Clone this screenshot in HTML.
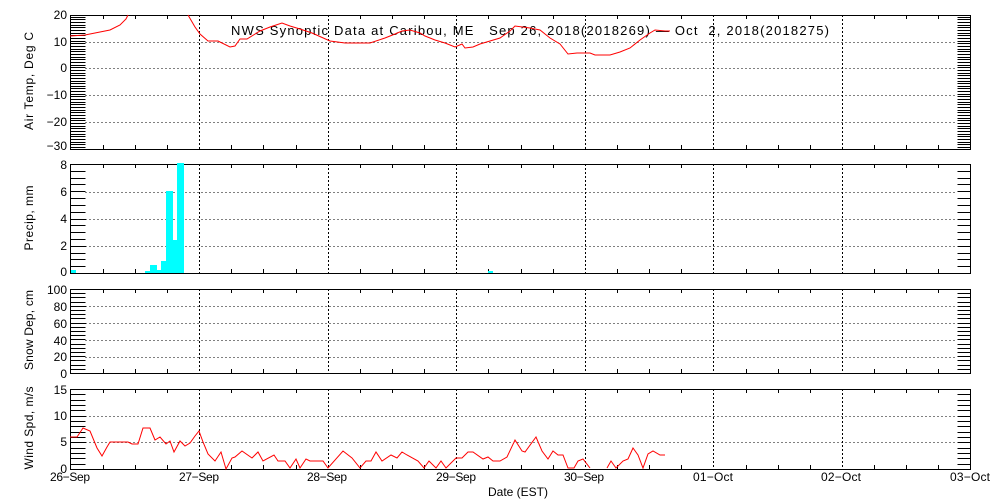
<!DOCTYPE html><html><head><meta charset="utf-8"><style>
html,body{margin:0;padding:0;background:#fff;width:1000px;height:500px;overflow:hidden}
svg text{font-family:"Liberation Sans",sans-serif;font-size:12px;fill:#000}
</style></head><body>
<svg id="s" width="1000" height="500" xmlns="http://www.w3.org/2000/svg" shape-rendering="crispEdges">
<g id="g"></g>
<g text-anchor="end">
<text x="67" y="19">20</text><text x="67" y="46">10</text><text x="67" y="72">0</text><text x="67" y="99">−10</text><text x="67" y="126">−20</text><text x="67" y="150">−30</text>
<text x="67" y="169">8</text><text x="67" y="196">6</text><text x="67" y="223">4</text><text x="67" y="250">2</text><text x="67" y="276">0</text>
<text x="67" y="294">100</text><text x="67" y="311">80</text><text x="67" y="328">60</text><text x="67" y="345">40</text><text x="67" y="361">20</text><text x="67" y="378">0</text>
<text x="67" y="394">15</text><text x="67" y="420">10</text><text x="67" y="446">5</text><text x="67" y="473">0</text>
</g>
<g text-anchor="middle">
<text x="70" y="481" textLength="40">26−Sep</text><text x="199" y="481" textLength="40">27−Sep</text><text x="327" y="481" textLength="40">28−Sep</text><text x="456" y="481" textLength="40">29−Sep</text><text x="584" y="481" textLength="40">30−Sep</text><text x="713" y="481" textLength="40">01−Oct</text><text x="841" y="481" textLength="40">02−Oct</text><text x="970" y="481" textLength="40">03−Oct</text>
<text x="518" y="496" textLength="60">Date (EST)</text>
<text transform="translate(33,81) rotate(-90)" textLength="98">Air Temp, Deg C</text>
<text transform="translate(33,218) rotate(-90)" textLength="65">Precip, mm</text>
<text transform="translate(33,330) rotate(-90)" textLength="80">Snow Dep, cm</text>
<text transform="translate(33,428) rotate(-90)" textLength="83">Wind Spd, m/s</text>
</g>
<text x="231" y="35" style="font-size:13px" textLength="598" xml:space="preserve">NWS Synoptic Data at Caribou, ME   Sep 26, 2018(2018269) — Oct  2, 2018(2018275)</text>
<g fill="#00ffff" shape-rendering="crispEdges">
<rect x="71" y="270" width="5" height="3"/><rect x="145" y="271" width="5" height="2"/><rect x="150" y="265" width="7" height="8"/><rect x="157" y="270" width="4" height="3"/><rect x="161" y="261" width="5" height="12"/><rect x="166" y="191" width="7" height="82"/><rect x="173" y="240" width="4" height="33"/><rect x="177" y="163" width="7" height="110"/><rect x="488" y="271" width="5" height="2"/>
</g>
<g fill="none" stroke="#f00" stroke-width="1" shape-rendering="auto">
<polyline points="70,36 85,35 100,32 110,30 120,25 126,19 128,15"/>
<polyline points="188,15 195,27 200,34 208,41 218,41 230,47 235,46 240,39 247,39 260,31 270,27 282,23 290,26 300,29 312,33 330,41 345,43 370,43 385,38 395,34 402,31 410,30 420,33 425,36 435,40 445,43 455,47 462,44 465,48 473,47 480,44 490,41 500,38 510,31 515,26 530,28 540,30 550,38 560,44 568,54 577,53 590,53 595,55 610,55 620,52 630,48 640,40 650,33 655,30 665,31 670,31"/>
<polyline points="70,437 77,437 83,428 90,431 97,448 102,456 107,447 110,442 120,442 128,442 132,444 138,444 143,428 150,428 155,440 160,437 166,444 170,441 174,452 180,441 185,446 190,443 195,436 199,431 203,442 208,454 215,461 221,452 226,469 232,458 235,457 242,451 252,458 258,452 263,461 274,455 278,461 285,461 290,468 296,459 300,468 306,459 310,461 323,461 328,468 343,451 352,458 360,468 366,461 371,461 376,452 382,461 391,455 397,458 402,452 407,455 418,461 424,468 429,461 436,468 441,461 446,468 456,458 462,458 468,452 473,452 483,459 488,457 493,461 500,461 507,457 515,440 522,451 525,452 536,437 542,451 548,459 553,451 558,455 563,455 568,468 574,468 578,461 583,459 590,468"/>
<polyline points="607,468 611,461 616,468 623,461 628,459 633,448 638,455 643,468 648,454 653,451 660,455 665,455"/>
</g>
</svg>
<script>
var g=document.getElementById('g'),N='http://www.w3.org/2000/svg';
function L(x1,y1,x2,y2,d){var l=document.createElementNS(N,'line');l.setAttribute('x1',x1);l.setAttribute('y1',y1);l.setAttribute('x2',x2);l.setAttribute('y2',y2);l.setAttribute('stroke','#000');if(d)l.setAttribute('stroke-dasharray',d);g.appendChild(l);}
var X0=70.5,X1=970.5,day=(X1-X0)/7;
var P=[[15,149,50,[41.5,68,95,122]],[164,273,16,[191.5,219,246]],[289,373,20,[306,323,340,357]],[389,469,15,[416,442]]];
P.forEach(function(p,i){
 var t=p[0],b=p[1];
 L(X0,t+.5,X1,t+.5);L(X0,b+.5,X1,b+.5);L(X0,t,X0,b+1);L(X1,t,X1,b+1);
 var n=p[2],h=(b-t)/n;
 if(i==0){h=2.66;for(var y=b-2;y>t;y-=h){L(X0,Math.round(y)+.5,X0+15,Math.round(y)+.5);L(X1-13,Math.round(y)+.5,X1,Math.round(y)+.5);}}
 else for(var k=1;k<n;k++){var y=Math.round(t+k*h)+.5;L(X0,y,X0+15,y);L(X1-13,y,X1,y);}
 p[3].forEach(function(y){y=Math.round(y)+.5;L(X0+15,y,X1-13,y,'1,3');});
 for(var d=1;d<7;d++){var x=Math.round(X0+d*day)+.5;L(x,t,x,b,'2,2');}
 for(var q=1;q<28;q++){if(q%4==0)continue;var x=Math.round(X0+q*day/4)+.5;L(x,t,x,t+4);L(x,b-4,x,b);}
});
</script>
</body></html>
